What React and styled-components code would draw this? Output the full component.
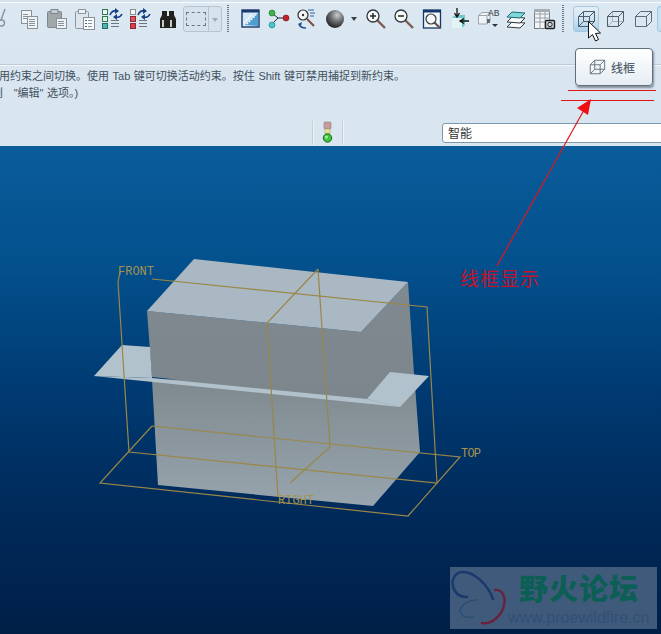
import React from "react";
import styled, { createGlobalStyle } from "styled-components";

const Global = createGlobalStyle`
  html, body {
    margin: 0;
    padding: 0;
    background: #00214a;
  }
`;

const Page = styled.div`
  position: relative;
  width: 661px;
  height: 634px;
  overflow: hidden;
  display: flex;
  flex-direction: column;
  background: #d9e6f0;
  font-family: "Liberation Sans", "Noto Sans CJK SC", sans-serif;
`;

const Rim = styled.div`
  height: 2px;
  background: #d5e3ee;
  border-bottom: 1px solid #f7fafc;
`;

const Toolbar = styled.div`
  height: 59px;
  padding-top: 2px;
  display: flex;
  align-items: flex-start;
  background: linear-gradient(#dce8f2, #d8e5ef);
  border-bottom: 1px solid #bccbd7;
`;

const Slot = styled.div`
  flex: none;
  width: ${(p) => p.$w || 28}px;
  height: 28px;
  margin-left: ${(p) => p.$ml || 0}px;
  overflow: hidden;
  display: flex;
  align-items: center;
  justify-content: ${(p) => (p.$end ? "flex-end" : "center")};
  svg {
    flex: none;
    display: block;
  }
`;

const Grip = styled.div`
  flex: none;
  width: 2px;
  height: 28px;
  margin-left: ${(p) => p.$ml}px;
  background: repeating-linear-gradient(#66798a 0 1px, #d9e6f0 1px 2px);
`;

const Combo = styled.div`
  flex: none;
  width: 39px;
  height: 26px;
  margin: 1px 0 0 1px;
  box-sizing: border-box;
  border: 1px solid #b4c4d0;
  border-radius: 3px;
  display: flex;
  background: #d6e3ed;
`;

const ComboBody = styled.div`
  flex: 1;
  display: flex;
  align-items: center;
  justify-content: center;
`;

const Dashed = styled.div`
  width: 18px;
  height: 12px;
  border: 1px dashed #66757f;
`;

const ComboArrow = styled.div`
  width: 12px;
  border-left: 1px solid #b4c4d0;
  display: flex;
  align-items: center;
  justify-content: center;
  &::after {
    content: "";
    border: 3px solid transparent;
    border-top: 4px solid #a0adb7;
    margin-top: 4px;
  }
`;

const Caret = styled.div`
  flex: none;
  width: 10px;
  height: 28px;
  display: flex;
  align-items: center;
  justify-content: center;
  &::after {
    content: "";
    border: 3px solid transparent;
    border-top: 4px solid #39424a;
    margin-top: 3px;
  }
`;

const ActiveButton = styled.div`
  flex: none;
  width: 26px;
  height: 26px;
  margin: 1px 2px 0 9px;
  box-sizing: border-box;
  border: 1px solid #a9c6da;
  border-radius: 3px;
  background: linear-gradient(#e4eff8, #cfe3f2 50%, #a7d0ef);
  display: flex;
  align-items: center;
  justify-content: center;
`;

const EdgeButton = styled.div`
  flex: none;
  width: 20px;
  height: 26px;
  margin-top: 1px;
  box-sizing: border-box;
  border: 1px solid #a9c6da;
  border-radius: 3px;
  background: #c6dff1;
`;

const Message = styled.div`
  height: 52px;
  padding-top: 2px;
  border-top: 1px solid #f2f6f9;
  font-size: 11px;
  line-height: 17px;
  word-spacing: 0.5px;
  color: #42505e;
  white-space: nowrap;
  overflow: hidden;
`;

const MessageLine = styled.div`
  margin-left: ${(p) => p.$ml}px;
`;

const StatusBar = styled.div`
  height: 26px;
  display: flex;
  align-items: center;
  svg {
    flex: none;
  }
`;

const StatusRule = styled.div`
  flex: none;
  width: 1px;
  height: 24px;
  margin-left: ${(p) => p.$ml}px;
  background: #c1cfda;
  border-right: 1px solid #eef3f7;
`;

const SmartSelect = styled.div`
  flex: none;
  width: 240px;
  height: 20px;
  margin-left: 98px;
  padding-left: 5px;
  box-sizing: border-box;
  border: 1px solid #7b98ad;
  border-radius: 3px;
  background: #fff;
  color: #333;
  font-family: "Noto Sans CJK SC", sans-serif;
  font-size: 12px;
  line-height: 18px;
`;

const Viewport = styled.div`
  flex: 1;
  background: linear-gradient(#0a5c9b 0%, #03508c 25%, #003a72 50%, #002a5a 75%, #001f47 100%);
  svg {
    display: block;
  }
`;

const Tooltip = styled.div`
  position: absolute;
  left: 575px;
  top: 48px;
  width: 78px;
  height: 38px;
  box-sizing: border-box;
  border: 1px solid #5f6f7d;
  border-radius: 4px;
  background: linear-gradient(#ffffff, #e6edf3);
  box-shadow: 1px 2px 2px rgba(60, 75, 90, 0.55);
  display: flex;
  align-items: center;
  gap: 5px;
  padding-left: 12px;
  font-family: "Noto Sans CJK SC", sans-serif;
  font-size: 12px;
  font-weight: 500;
  color: #52626f;
`;

const Overlay = styled.svg`
  position: absolute;
  left: 0;
  top: 0;
  pointer-events: none;
`;

const RedNote = styled.div`
  position: absolute;
  left: 460px;
  top: 266px;
  font-family: "Noto Sans CJK SC", sans-serif;
  font-size: 19px;
  line-height: 24px;
  letter-spacing: 1px;
  color: #c5122c;
`;

const Watermark = styled.div`
  position: absolute;
  left: 450px;
  top: 567px;
  width: 207px;
  height: 62px;
  background: #405a7b;
  svg {
    position: absolute;
    left: 0;
    top: 0;
  }
`;

const WatermarkTitle = styled.div`
  position: absolute;
  left: 69px;
  top: 4px;
  font-family: "Noto Sans CJK SC", sans-serif;
  font-size: 29px;
  line-height: 32px;
  font-weight: 900;
  letter-spacing: 1px;
  color: #0c5f55;
  white-space: nowrap;
`;

const WatermarkUrl = styled.div`
  position: absolute;
  left: 58px;
  top: 42px;
  font-size: 16px;
  line-height: 18px;
  color: #2f5176;
  white-space: nowrap;
`;

const Ico = ({ children, size = 28 }) => (
  <svg width={size} height={size} viewBox={`0 0 ${size} ${size}`}>
    {children}
  </svg>
);

const Doc = ({ x, y, w, h, stroke = "#87929b", fill = "#f1f4f6" }) => (
  <rect x={x + 0.5} y={y + 0.5} width={w} height={h} fill={fill} stroke={stroke} />
);

const Rows = ({ x, y, w, n, gap = 2, color = "#87929b" }) => (
  <g stroke={color}>
    {Array.from({ length: n }).map((_, i) => (
      <line key={i} x1={x} x2={x + w} y1={y + i * gap + 0.5} y2={y + i * gap + 0.5} />
    ))}
  </g>
);

const Scissors = () => (
  <svg width="14" height="28" viewBox="0 0 14 28">
    <g fill="none" stroke="#87929b" strokeWidth="1.4">
      <path d="M5 4 L1 15" />
      <circle cx="1.5" cy="18" r="3" />
    </g>
  </svg>
);

const CopyIcon = () => (
  <Ico>
    <Doc x={7} y={5} w={10} h={13} />
    <Rows x={9} y={9} w={5} n={3} />
    <Doc x={13} y={11} w={10} h={12} />
    <Rows x={15} y={14} w={6} n={4} />
  </Ico>
);

const PasteIcon = () => (
  <Ico>
    <rect x="5.5" y="6.5" width="14" height="16" rx="1" fill="#a2a7aa" stroke="#7e878e" />
    <rect x="9" y="4.5" width="7" height="4" fill="#c7ccd0" stroke="#7e878e" />
    <Doc x={14} y={13} w={10} h={10} />
    <Rows x={16} y={16} w={6} n={3} />
  </Ico>
);

const PasteSpecialIcon = () => (
  <Ico>
    <rect x="5.5" y="6.5" width="13" height="17" rx="1" fill="#dfe6eb" stroke="#8c969e" />
    <rect x="8.5" y="4.5" width="7" height="4" fill="#eef2f5" stroke="#8c969e" />
    <Doc x={13} y={12} w={11} h={12} fill="#f9fbfc" />
    <g fill="#59646d">
      <rect x="15" y="15" width="2" height="1" />
      <rect x="15" y="18" width="2" height="1" />
      <rect x="15" y="21" width="2" height="1" />
    </g>
    <Rows x={18} y={15} w={4} n={3} gap={3} />
  </Ico>
);

const TreeIcon = ({ colors }) => (
  <Ico>
    {colors.map((c, i) => (
      <rect key={i} x="4.5" y={4.5 + i * 7} width="5" height="5" fill={c[0]} stroke={c[1]} />
    ))}
    <g fill="none" stroke="#123f86" strokeWidth="1.6">
      <path d="M12 10 Q14 5 18 6" />
      <path d="M24 9 Q22 13 18 12" />
    </g>
    <path d="M17 3 L21 6 L17 9 Z M19 9 L15 12 L19 15 Z" fill="#123f86" />
    <Rows x={13} y={15} w={8} n={3} gap={3} color="#6c7780" />
  </Ico>
);

const Binoculars = () => (
  <Ico>
    <g fill="#23221f">
      <path d="M8 6 H13 V12 L14 14 V23 H6 V14 L8 10 Z" />
      <path d="M15 6 H20 V10 L22 14 V23 H14 V14 L15 12 Z" />
      <rect x="12" y="11" width="4" height="6" />
    </g>
    <g fill="#c9ccc9">
      <rect x="8" y="15" width="2" height="7" />
      <rect x="16" y="15" width="2" height="7" />
    </g>
  </Ico>
);

const SketchIcon = () => (
  <Ico>
    <rect x="5" y="5" width="17" height="17" fill="#d3e8f6" stroke="#17386c" strokeWidth="1.4" />
    <rect x="5" y="5" width="17" height="2.5" fill="#17386c" />
    <path d="M8 20 L21 8 V21 Z" fill="#4f9cd0" />
    <path d="M7 18 L15 9 M10 19 L19 10" stroke="#fff" strokeWidth="1.5" strokeDasharray="1.5 1.5" />
  </Ico>
);

const NodesIcon = () => (
  <Ico>
    <path d="M7 8 L13 13 L7 19 M13 13 H21" fill="none" stroke="#1f2a33" />
    <circle cx="7" cy="8" r="3" fill="#39b54a" stroke="#1b6a28" strokeWidth=".6" />
    <circle cx="21" cy="13" r="3" fill="#c3222c" stroke="#6c1015" strokeWidth=".6" />
    <circle cx="7" cy="20" r="3" fill="#46c6c6" stroke="#1c7b7b" strokeWidth=".6" />
  </Ico>
);

const SpinIcon = () => (
  <Ico>
    <circle cx="10" cy="10" r="5" fill="#f5f7f8" stroke="#2a2f33" strokeWidth="1.2" />
    <circle cx="10" cy="10" r="1.2" fill="#2a2f33" />
    <path d="M14 14 L21 21" stroke="#7a4b3e" strokeWidth="2" />
    <path d="M15 5 H21 M17 8 H22 M17 11 H21" stroke="#2f5f9a" />
    <path d="M6 19 Q7 23 13 23" fill="none" stroke="#1f4f94" strokeWidth="1.4" />
    <path d="M5 19 L9 17 L8 21 Z" fill="#1f4f94" />
  </Ico>
);

const BallIcon = () => (
  <Ico>
    <defs>
      <radialGradient id="ball" cx="0.62" cy="0.28" r="0.8">
        <stop offset="0" stopColor="#c9cdcf" />
        <stop offset="0.45" stopColor="#6d7072" />
        <stop offset="1" stopColor="#121314" />
      </radialGradient>
    </defs>
    <circle cx="14" cy="14" r="9" fill="url(#ball)" />
  </Ico>
);

const Magnifier = ({ sign }) => (
  <Ico>
    <path d="M15 15 L23 23" stroke="#7d5a52" strokeWidth="2.4" />
    <circle cx="11" cy="11" r="6" fill="#f7f8f8" stroke="#32383d" strokeWidth="1.3" />
    <path d="M8 11 H14" stroke="#23282c" strokeWidth="1.5" />
    {sign === "plus" && <path d="M11 8 V14" stroke="#23282c" strokeWidth="1.5" />}
  </Ico>
);

const RefitIcon = () => (
  <Ico>
    <rect x="5.5" y="5" width="17" height="18" fill="#f2f6f9" stroke="#17386c" strokeWidth="1.3" />
    <rect x="5" y="5" width="18" height="2.5" fill="#17386c" />
    <path d="M16 17 L22 23" stroke="#6b5148" strokeWidth="2.2" />
    <circle cx="13" cy="14" r="5" fill="#f7fafa" stroke="#33393e" strokeWidth="1.2" />
  </Ico>
);

const OrientIcon = () => (
  <Ico>
    <path d="M6 13 L9 10 H19 V20 L16 23 H6 Z" fill="#6fc6cc" />
    <path d="M6 13 H16 V23 H6 Z" fill="#e2f5f6" />
    <path d="M11 3 V11 M8.5 8 L11 12 L13.5 8" fill="none" stroke="#111" strokeWidth="1.3" />
    <path d="M23 16 H14 M18 13.5 L14 16 L18 18.5" fill="none" stroke="#111" strokeWidth="1.3" />
  </Ico>
);

const ViewsIcon = () => (
  <Ico>
    <path d="M4.5 10.5 L8 7.5 H16 V16 L13 19 H4.5 Z" fill="#f0f4f6" stroke="#9aa6af" />
    <path d="M13 10.5 H4.5 M13 10.5 V19 M13 10.5 L16 7.5" fill="none" stroke="#9aa6af" />
    <rect x="13" y="14" width="3" height="4" fill="#5f686f" />
    <text x="14" y="10.5" fontFamily="Liberation Mono, monospace" fontSize="9.5" fill="#39434b">AB</text>
    <path d="M18 19 H24 L21 22 Z" fill="#30383f" />
  </Ico>
);

const LayersIcon = () => (
  <Ico>
    <path d="M5 22 L10 17 L23 18 L18 23 Z" fill="#fafcfc" stroke="#30383f" />
    <path d="M5 17 L10 12 L23 13 L18 18 Z" fill="#fafcfc" stroke="#30383f" />
    <path d="M5 12 L10 7 L23 8 L18 13 Z" fill="#7ed7d9" stroke="#1e6d78" />
  </Ico>
);

const CameraIcon = () => (
  <Ico>
    <rect x="4.5" y="4.5" width="15" height="19" fill="#f3f5f7" stroke="#717a82" />
    <path d="M4 9 H20 M4 13 H20 M4 17 H20 M10 4 V24 M15 4 V24" stroke="#98a2a9" />
    <rect x="4" y="4" width="16" height="3" fill="#a5aeb5" />
    <rect x="15.5" y="15.5" width="9" height="8" rx="1" fill="#cdd2d4" stroke="#1d2023" strokeWidth="1.4" />
    <circle cx="20" cy="19.5" r="2.2" fill="#d9dcdc" stroke="#1d2023" />
  </Ico>
);

// front face, back face and the edges between them
const Cube = ({ mode, size = 20, color = "#4d5d6a" }) => (
  <svg width={size} height={size} viewBox="0 0 20 20">
    <g fill="none" stroke={color} strokeWidth="1">
      {mode !== "plain" && (
        <g stroke={mode === "hidden" ? "#a5b2bc" : color}>
          <path d="M7.5 2.5 V12.5 H18.5 M7.5 12.5 L2.5 17.5" />
        </g>
      )}
      <path d="M2.5 7.5 H13.5 V17.5 H2.5 Z M2.5 7.5 L7.5 2.5 H18.5 V12.5 L13.5 17.5 M13.5 7.5 L18.5 2.5" />
    </g>
  </svg>
);

const TrafficLight = () => (
  <svg width="28" height="24" viewBox="0 0 28 24">
    <rect x="10" y="1" width="7" height="7" rx="1" fill="#c79a9a" stroke="#8e7b7b" strokeWidth=".6" />
    <rect x="11" y="8" width="5" height="5" fill="#e8e39a" stroke="#a3a06a" strokeWidth=".6" />
    <circle cx="13.5" cy="17" r="4.2" fill="#3cc43c" stroke="#166a16" />
    <circle cx="12.5" cy="16" r="1.5" fill="#a7eea7" />
  </svg>
);

const Model = () => (
  <svg width="661" height="488" viewBox="0 146 661 488">
    <defs>
      <linearGradient id="lower" x1="0" y1="0" x2="0" y2="1">
        <stop offset="0" stopColor="#7d878d" />
        <stop offset="1" stopColor="#98a5ae" />
      </linearGradient>
      <linearGradient id="upper" x1="0" y1="0" x2="0" y2="1">
        <stop offset="0" stopColor="#80898f" />
        <stop offset="1" stopColor="#7c868c" />
      </linearGradient>
    </defs>
    <polygon points="152,380 414,372 420,452 373,506 158,485" fill="url(#lower)" />
    <polygon points="408,282 414,374 367,399 152,377 147,311 361,332" fill="url(#upper)" />
    <polygon points="194,259 408,282 361,332 147,311" fill="#a9b8c3" />
    <g fill="#b2c2cd">
      <polygon points="122,345 150,347 152,378 94,376" />
      <polygon points="152,378 367,399 400,407 153,382 94,376" />
      <polygon points="390,372 429,376 400,407 367,399" />
    </g>
    <g fill="none" stroke="#9a8747" strokeWidth="1.2">
      <path d="M118,282 L120,272 M118,282 L129,452 L437,483 L427,307 L152,279" />
      <path d="M152,426 L100,483 L408,516 L460,457 L152,426" />
      <path d="M318,269 L267,323 L278,497 M318,269 L330,447 L290,483" />
    </g>
    <g fontFamily="Liberation Mono, monospace" fontSize="12" fill="#a5924f">
      <text x="118" y="275" textLength="36">FRONT</text>
      <text x="461" y="457" textLength="20">TOP</text>
      <text x="278" y="504" textLength="36">RIGHT</text>
    </g>
  </svg>
);

const Wings = () => (
  <svg width="207" height="62" viewBox="0 0 207 62">
    <g fill="none" strokeLinecap="round">
      <path d="M43 32 C38 18 24 4 12 5 C3 6 0 16 5 24 C8 29 12 30 17 30" stroke="#1b3a6c" strokeWidth="2.6" />
      <path d="M45 23 C52 22 56 30 54 38 C52 48 42 58 32 56" stroke="#682240" strokeWidth="2.4" />
      <path d="M27 33 C18 33 11 38 10 44 C11 50 18 51 23 50" stroke="#2b4f72" strokeWidth="1.6" />
    </g>
  </svg>
);

const App = () => (
  <Page>
    <Global />
    <Rim />
    <Toolbar>
      <Slot $w={14}>
        <Scissors />
      </Slot>
      <Slot><CopyIcon /></Slot>
      <Slot><PasteIcon /></Slot>
      <Slot><PasteSpecialIcon /></Slot>
      <Slot>
        <TreeIcon colors={[["#f2f6f7", "#2e7a58"], ["#dff1e6", "#2e7a58"], ["#4db6ac", "#1f6d66"]]} />
      </Slot>
      <Slot>
        <TreeIcon colors={[["#f6f6f6", "#8c8f92"], ["#e2525f", "#8a2a33"], ["#d93d4c", "#8a2a33"]]} />
      </Slot>
      <Slot><Binoculars /></Slot>
      <Combo>
        <ComboBody><Dashed /></ComboBody>
        <ComboArrow />
      </Combo>
      <Grip $ml={5} />
      <Slot $ml={8}><SketchIcon /></Slot>
      <Slot><NodesIcon /></Slot>
      <Slot><SpinIcon /></Slot>
      <Slot><BallIcon /></Slot>
      <Caret />
      <Slot $ml={3}><Magnifier sign="plus" /></Slot>
      <Slot><Magnifier sign="minus" /></Slot>
      <Slot><RefitIcon /></Slot>
      <Slot><OrientIcon /></Slot>
      <Slot><ViewsIcon /></Slot>
      <Slot><LayersIcon /></Slot>
      <Slot><CameraIcon /></Slot>
      <Grip $ml={4} />
      <ActiveButton><Cube mode="wire" /></ActiveButton>
      <Slot><Cube mode="hidden" /></Slot>
      <Slot><Cube mode="plain" color="#5b6a76" /></Slot>
      <EdgeButton />
    </Toolbar>
    <Message>
      <MessageLine $ml={-1}>用约束之间切换。使用 Tab 键可切换活动约束。按住 Shift 键可禁用捕捉到新约束。</MessageLine>
      <MessageLine $ml={-8}>则{"\u00a0\u00a0"} "编辑" 选项。)</MessageLine>
    </Message>
    <StatusBar>
      <StatusRule $ml={312} />
      <TrafficLight />
      <StatusRule $ml={0} />
      <SmartSelect>智能</SmartSelect>
    </StatusBar>
    <Viewport>
      <Model />
    </Viewport>

    <Tooltip>
      <Cube mode="wire" size={18} color="#5d6c78" />
      线框
    </Tooltip>

    <Overlay width="661" height="634" viewBox="0 0 661 634">
      <path d="M568 90.5 H656 M561 100.5 H654" stroke="#e0161c" />
      <path d="M497 266 L584 110" stroke="#e0161c" strokeWidth="1.2" />
      <polygon points="591,99 588,115 577,108" fill="#f00c10" />
      <path
        d="M588.5 21.5 V38 L592.5 34.5 L595.5 41 L598.5 39.5 L595.5 33.5 L600.5 33 Z"
        fill="#fff"
        stroke="#111"
      />
    </Overlay>
    <RedNote>线框显示</RedNote>

    <Watermark>
      <Wings />
      <WatermarkTitle>野火论坛</WatermarkTitle>
      <WatermarkUrl>www.proewildfire.cn</WatermarkUrl>
    </Watermark>
  </Page>
);

export default App;
